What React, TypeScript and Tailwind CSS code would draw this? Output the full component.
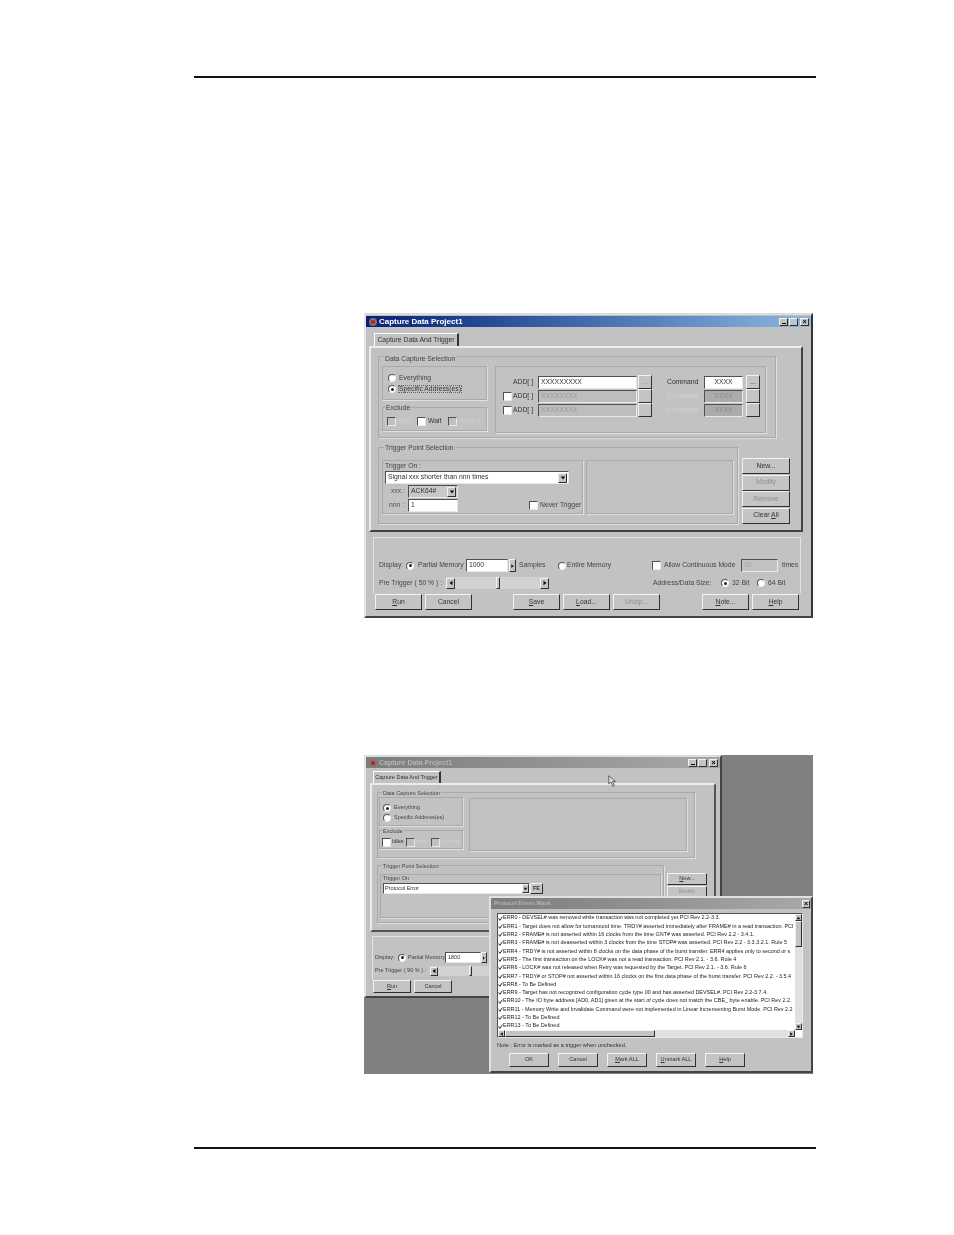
import type { ReactNode } from "react";

const ERRORS = [
  "ERR0 - DEVSEL# was removed while transaction was not completed yet.PCI Rev 2.2-3.3.",
  "ERR1 - Target does not allow for turnaround time. TRDY# asserted immediately after FRAME# in a read transaction. PCI",
  "ERR2 - FRAME# is not asserted within 16 clocks from the time GNT# was asserted. PCI Rev 2.2 - 3.4.1.",
  "ERR3 - FRAME# is not deasserted within 3 clocks from the time STOP# was asserted. PCI Rev 2.2 - 3.3.3.2.1. Rule 5",
  "ERR4 - TRDY# is not asserted within 8 clocks on the data phase of the burst transfer. ERR4 applies only to second or s",
  "ERR5 - The first transaction on the LOCK# was not a read transaction. PCI Rev 2.1. - 3.6. Rule 4",
  "ERR6 - LOCK# was not released when Retry was requested by the Target. PCI Rev 2.1. - 3.6. Rule 6",
  "ERR7 - TRDY# or STOP# not asserted within 16 clocks on the first data phase of the burst transfer. PCI Rev 2.2. - 3.5.4",
  "ERR8 - To Be Defined",
  "ERR9 - Target has not recognized configuration cycle type 00 and has asserted DEVSEL#. PCI Rev 2.2-3.7.4.",
  "ERR10 - The IO byte address [AD0, AD1] given at the start of cycle does not match the CBE_ byte enable. PCI Rev 2.2.",
  "ERR11 - Memory Write and Invalidate Command were not implemented in Linear Incrementing Burst Mode. PCI Rev 2.2",
  "ERR12 - To Be Defined",
  "ERR13 - To Be Defined",
];

const raised = "border border-t-[#f2f2f2] border-l-[#f2f2f2] border-r-[#303030] border-b-[#303030] bg-[#c4c4c4]";
const sunken = "border border-t-[#505050] border-l-[#505050] border-r-[#e8e8e8] border-b-[#e8e8e8]";
const etched = "border border-[#a9a9a9] shadow-[1px_1px_0_#e0e0e0]";

function Btn({ children, className, off }: { children?: ReactNode; className: string; off?: boolean }) {
  return (
    <div className={`${raised} ${className} flex shrink-0 items-center justify-center whitespace-nowrap ${off ? "text-[#8e8e8e]" : "text-[#333]"}`}>
      {children}
    </div>
  );
}

function Radio({ on }: { on?: boolean }) {
  return (
    <span className="flex h-[8px] w-[8px] shrink-0 items-center justify-center rounded-full border border-t-[#555] border-l-[#555] border-r-[#eee] border-b-[#eee] bg-white">
      {on && <span className="h-[3px] w-[3px] rounded-full bg-[#222]" />}
    </span>
  );
}

function Check({ off }: { off?: boolean }) {
  return <span className={`${sunken} block h-[9px] w-[9px] shrink-0 ${off ? "bg-[#c0c0c0]" : "bg-white"}`} />;
}

function Legend({ children, className }: { children: ReactNode; className: string }) {
  return <span className={`absolute whitespace-nowrap bg-[#c2c2c2] px-[1px] text-[#444] ${className}`}>{children}</span>;
}

function Title({ text, inactive, className }: { text: string; inactive?: boolean; className: string }) {
  return (
    <div
      className={`flex shrink-0 items-center justify-between bg-gradient-to-r pl-[3px] pr-[2px] font-bold ${
        inactive ? "from-[#7d7d7d] to-[#a8a8a8] text-[#b5b5b5]" : "from-[#0a1f78] to-[#8db8e0] text-white"
      } ${className}`}
    >
      <span className="flex items-center gap-[2px] whitespace-nowrap">
        <span className="h-[8px] w-[8px] rounded-full border-2 border-[#777] bg-[#e01010]" />
        {text}
      </span>
      <span className="flex gap-[1px]">
        <span className={`${raised} flex h-[8px] w-[9px] items-end justify-center pb-[1px]`}>
          <span className="h-[1px] w-[4px] bg-black" />
        </span>
        <span className={`${raised} h-[8px] w-[9px]`} />
        <span className={`${raised} ml-[1px] flex h-[8px] w-[9px] items-center justify-center text-[7px] leading-none text-black`}>×</span>
      </span>
    </div>
  );
}

function Arrow({ dir }: { dir: "down" | "left" | "right" | "up" }) {
  const pts = { down: "1,2 7,2 4,6", left: "6,1 6,7 2,4", right: "2,1 2,7 6,4", up: "1,6 7,6 4,2" }[dir];
  return (
    <svg viewBox="0 0 8 8" className="h-[6px] w-[6px]">
      <polygon points={pts} fill="#111" />
    </svg>
  );
}

function AddRow({ active, tick, value, cmd }: { active?: boolean; tick?: boolean; value: string; cmd: string }) {
  return (
    <div className="flex h-[14px] items-center">
      <span className="flex w-[10px] shrink-0">{tick && <Check />}</span>
      <span className="w-[25px] shrink-0 whitespace-nowrap text-[#333]">ADD[ ]</span>
      <div className={`${sunken} flex h-[13px] w-[99px] shrink-0 items-center pl-[2px] ${active ? "bg-white text-[#333]" : "bg-[#bdbdbd] text-[#999]"}`}>
        {value}
      </div>
      <Btn className="ml-[1px] h-[14px] w-[14px]" off>{active ? "..." : ""}</Btn>
      <span className={`ml-[15px] w-[37px] shrink-0 whitespace-nowrap ${active ? "text-[#333]" : "text-[#d2d2d2]"}`}>Command</span>
      <div className={`${sunken} flex h-[13px] w-[39px] shrink-0 items-center justify-center ${active ? "bg-white text-[#333]" : "bg-[#ababab] text-[#8c8c8c]"}`}>
        {cmd}
      </div>
      <Btn className="ml-[3px] h-[14px] w-[14px]">{active ? "..." : ""}</Btn>
    </div>
  );
}

function FirstWindow() {
  return (
    <div className="ml-[364px] h-[305px] w-[449px] border-t-2 border-r-2 border-b-2 border-l-2 border-t-[#dcdcdc] border-r-[#333] border-b-[#444] border-l-[#e4e4e4] bg-[#c2c2c2] pt-[1px] text-[6.8px] leading-none">
      <Title text="Capture Data Project1" className="h-[11px] text-[8px]" />
      <div className="ml-[8px] mt-[6px] flex h-[13px] w-[85px] items-center justify-center whitespace-nowrap border-t border-l border-r-2 border-t-white border-l-white border-r-[#333] text-[#333]">
        Capture Data And Trigger
      </div>
      <div className="ml-[3px] h-[186px] w-[434px] border-2 border-t-[#ececec] border-l-[#ececec] border-r-[#444] border-b-[#444] pl-[7px] pt-[8px]">
        {/* capture selection */}
        <div className={`relative flex h-[82px] w-[398px] gap-[8px] pl-[3px] pt-[9px] ${etched}`}>
          <Legend className="-top-[1px] left-[5px]">Data Capture Selection</Legend>
          <div className="flex w-[105px] flex-col gap-[7px]">
            <div className={`flex h-[34px] flex-col gap-[3px] pl-[5px] pt-[7px] ${etched}`}>
              <div className="flex items-center gap-[3px] text-[#444]"><Radio />Everything</div>
              <div className="flex items-center gap-[3px] text-[#333]"><Radio on /><span className="outline outline-1 outline-dotted outline-[#666]">Specific Address(es)</span></div>
            </div>
            <div className={`relative flex h-[24px] items-center gap-[2px] pl-[4px] pt-[5px] ${etched}`}>
              <Legend className="-top-[3px] left-[2px]">Exclude</Legend>
              <Check off /><span className="w-[17px] text-[#d0d0d0]">Idles</span>
              <Check /><span className="w-[18px] text-[#333]">Wait</span>
              <Check off /><span className="text-[#d0d0d0]">Retries</span>
            </div>
          </div>
          <div className={`h-[67px] w-[271px] pl-[7px] pt-[8px] ${etched}`}>
            <AddRow active value="XXXXXXXXX" cmd="XXXX" />
            <AddRow tick value="XXXXXXXX" cmd="XXXX" />
            <AddRow tick value="XXXXXXXX" cmd="XXXX" />
          </div>
        </div>

        {/* trigger */}
        <div className="mt-[9px] flex gap-[4px]">
          <div className={`relative flex h-[77px] w-[360px] gap-[3px] pl-[3px] pt-[12px] ${etched}`}>
            <Legend className="-top-[3px] left-[5px]">Trigger Point Selection</Legend>
            <div className={`relative h-[54px] w-[201px] pl-[2px] pt-[10px] ${etched}`}>
              <span className="absolute left-[2px] top-[2px] text-[#444]">Trigger On :</span>
              <div className={`${sunken} flex h-[13px] w-[184px] items-center justify-between bg-white pl-[2px] pr-[1px] text-[#333]`}>
                Signal xxx shorter than nnn times
                <Btn className="h-[10px] w-[9px]"><Arrow dir="down" /></Btn>
              </div>
              <div className="mt-[1px] flex h-[13px] items-center">
                <span className="w-[23px] pl-[6px] text-[#555]">xxx :</span>
                <div className={`${sunken} flex h-[13px] w-[50px] items-center justify-between bg-[#c8c8c8] pl-[2px] pr-[1px] text-[#333]`}>
                  ACK64#
                  <Btn className="h-[10px] w-[9px]"><Arrow dir="down" /></Btn>
                </div>
              </div>
              <div className="mt-[1px] flex h-[13px] items-center">
                <span className="w-[23px] pl-[4px] text-[#555]">nnn :</span>
                <div className={`${sunken} flex h-[13px] w-[50px] items-center bg-white pl-[2px] text-[#333]`}>1</div>
                <span className="ml-[71px] flex items-center gap-[2px] whitespace-nowrap text-[#444]"><Check />Never Trigger</span>
              </div>
            </div>
            <div className={`h-[54px] w-[147px] ${etched}`} />
          </div>
          <div className="mt-[11px] flex flex-col gap-[0.5px]">
            <Btn className="h-[16px] w-[48px]">New...</Btn>
            <Btn className="h-[16px] w-[48px]" off>Modify</Btn>
            <Btn className="h-[16px] w-[48px]" off>Remove</Btn>
            <Btn className="h-[16px] w-[48px]"><span>Clear <u>A</u>ll</span></Btn>
          </div>
        </div>
      </div>

      {/* lower panel */}
      <div className="ml-[7px] mt-[5px] h-[56px] w-[428px] border-t border-l border-r border-t-[#e4e4e4] border-l-[#e4e4e4] border-r-[#e4e4e4] pl-[5px] pt-[21px] text-[#444]">
        <div className="flex h-[13px] items-center whitespace-nowrap">
          <span className="w-[27px] shrink-0">Display:</span>
          <Radio on />
          <span className="ml-[4px] w-[48px] shrink-0">Partial Memory</span>
          <div className={`${sunken} flex h-[13px] w-[42px] shrink-0 items-center bg-white pl-[2px] text-[#333]`}>1000</div>
          <Btn className="ml-[1px] h-[13px] w-[7px]"><Arrow dir="right" /></Btn>
          <span className="ml-[3px] w-[27px] shrink-0">Samples</span>
          <span className="ml-[12px] flex shrink-0"><Radio /></span>
          <span className="ml-[1px] w-[44px] shrink-0">Entire Memory</span>
          <span className="ml-[41px] flex shrink-0"><Check /></span>
          <span className="ml-[3px] w-[72px] shrink-0">Allow Continuous Mode</span>
          <div className={`${sunken} ml-[5px] flex h-[13px] w-[37px] shrink-0 items-center pl-[2px] text-[#aaa]`}>30</div>
          <span className="ml-[4px]">times</span>
        </div>
        <div className="mt-[5px] flex h-[12px] items-center whitespace-nowrap">
          <span className="w-[67px] shrink-0">Pre Trigger ( 50 % ) :</span>
          <div className="flex h-[12px] w-[103px] shrink-0 items-center justify-between bg-[#d2d2d2]">
            <Btn className="h-[11px] w-[9px]"><Arrow dir="left" /></Btn>
            <Btn className="h-[12px] w-[4px]" />
            <Btn className="h-[11px] w-[9px]"><Arrow dir="right" /></Btn>
          </div>
          <span className="ml-[104px] w-[58px] shrink-0">Address/Data Size:</span>
          <span className="ml-[10px] flex shrink-0"><Radio on /></span>
          <span className="ml-[1px] w-[27px] shrink-0 pl-[2px]">32 Bit</span>
          <Radio />
          <span className="ml-[1px] pl-[2px]">64 Bit</span>
        </div>
      </div>
      <div className="ml-[9px] mt-[1px] flex h-[16px] items-center text-[#333]">
        <Btn className="h-[16px] w-[47px]"><span><u>R</u>un</span></Btn>
        <Btn className="ml-[3px] h-[16px] w-[47px]">Cancel</Btn>
        <Btn className="ml-[41px] h-[16px] w-[47px]"><span><u>S</u>ave</span></Btn>
        <Btn className="ml-[3px] h-[16px] w-[47px]"><span><u>L</u>oad...</span></Btn>
        <Btn className="ml-[3px] h-[16px] w-[47px]" off>Unzip...</Btn>
        <Btn className="ml-[42px] h-[16px] w-[47px]"><span><u>N</u>ote...</span></Btn>
        <Btn className="ml-[3px] h-[16px] w-[47px]"><span><u>H</u>elp</span></Btn>
      </div>
    </div>
  );
}

function ErrorMask() {
  return (
    <div className="absolute left-[125px] top-[141px] h-[177px] w-[324px] border-2 border-t-[#e0e0e0] border-l-[#e0e0e0] border-r-[#444] border-b-[#444] bg-[#c2c2c2] text-[5.6px] leading-none">
      <div className="flex h-[11px] items-center justify-between bg-gradient-to-r from-[#7d7d7d] to-[#a8a8a8] pl-[3px] pr-[1px] font-bold text-[#b5b5b5]">
        Protocol Errors Mask
        <span className={`${raised} flex h-[8px] w-[8px] items-center justify-center text-[7px] text-black`}>×</span>
      </div>
      <div className={`ml-[6px] mt-[4px] h-[125px] w-[306px] ${sunken} bg-white`}>
        <div className="flex h-[116px]">
          <div className="h-full w-[297px] overflow-hidden text-[5.45px] text-[#222]">
            {ERRORS.map((line) => (
              <div key={line} className="flex h-[8.3px] items-center whitespace-nowrap">
                <svg viewBox="0 0 8 8" className="h-[5px] w-[5px] shrink-0">
                  <path d="M1 4 L3 7 L7 1" fill="none" stroke="#111" strokeWidth="1.4" />
                </svg>
                {line}
              </div>
            ))}
          </div>
          <div className="flex h-full w-[7px] flex-col justify-between bg-[#e0e0e0]">
            <Btn className="h-[7px] w-[7px]"><Arrow dir="up" /></Btn>
            <Btn className="mb-auto h-[26px] w-[7px]" />
            <Btn className="h-[7px] w-[7px]"><Arrow dir="down" /></Btn>
          </div>
        </div>
        <div className="flex h-[7px] w-[297px] items-center bg-[#e0e0e0]">
          <Btn className="h-[7px] w-[7px]"><Arrow dir="left" /></Btn>
          <Btn className="h-[7px] w-[150px]" />
          <Btn className="ml-auto h-[7px] w-[7px]"><Arrow dir="right" /></Btn>
        </div>
      </div>
      <div className="ml-[6px] mt-[5px] whitespace-nowrap text-[#333]">Note : Error is marked as a trigger when unchecked.</div>
      <div className="ml-[18px] mt-[4px] flex gap-[9px] text-[#333]">
        <Btn className="h-[14px] w-[40px]">OK</Btn>
        <Btn className="h-[14px] w-[40px]">Cancel</Btn>
        <Btn className="h-[14px] w-[40px]"><span><u>M</u>ark ALL</span></Btn>
        <Btn className="h-[14px] w-[40px]"><span><u>U</u>nmark ALL</span></Btn>
        <Btn className="h-[14px] w-[40px]"><span><u>H</u>elp</span></Btn>
      </div>
    </div>
  );
}

function SecondWindow() {
  return (
    <div className="relative ml-[364px] h-[319px] w-[449px] bg-[#808080] text-[5.5px] leading-none">
      <div className="h-[243px] w-[358px] border-2 border-t-[#dcdcdc] border-r-[#444] border-b-[#444] border-l-[#e4e4e4] bg-[#c2c2c2]">
        <Title text="Capture Data Project1" inactive className="h-[11px] text-[7px]" />
        <div className="ml-[7px] mt-[3px] flex h-[12px] w-[68px] items-center justify-center whitespace-nowrap border-t border-l border-r-2 border-t-white border-l-white border-r-[#333] text-[#333]">
          Capture Data And Trigger
        </div>
        <div className="ml-[4px] h-[149px] w-[346px] border-2 border-t-[#ececec] border-l-[#ececec] border-r-[#555] border-b-[#555] pl-[5px] pt-[7px]">
          <div className={`relative flex h-[66px] w-[318px] gap-[6px] pl-[1px] pt-[4px] ${etched}`}>
            <Legend className="-top-[2px] left-[4px]">Data Capture Selection</Legend>
            <div className="flex w-[84px] flex-col gap-[4px]">
              <div className={`flex h-[29px] flex-col gap-[2px] pl-[3px] pt-[6px] ${etched}`}>
                <div className="flex items-center gap-[3px] text-[#444]"><Radio on />Everything</div>
                <div className="flex items-center gap-[3px] text-[#444]"><Radio />Specific Address(es)</div>
              </div>
              <div className={`relative flex h-[19px] items-center gap-[1px] pl-[2px] pt-[5px] ${etched}`}>
                <Legend className="-top-[2px] left-[2px]">Exclude</Legend>
                <Check /><span className="w-[13px] text-[#333]">Idles</span>
                <Check off /><span className="w-[14px] text-[#d0d0d0]">Wait</span>
                <Check off /><span className="text-[#d0d0d0]">Retries</span>
              </div>
            </div>
            <div className={`mt-[1px] h-[53px] w-[218px] ${etched}`} />
          </div>
          <div className="mt-[7px] flex gap-[3px]">
            <div className={`relative h-[58px] w-[287px] pl-[2px] pt-[8px] ${etched}`}>
              <Legend className="-top-[2px] left-[4px]">Trigger Point Selection</Legend>
              <div className={`relative h-[44px] w-[281px] pl-[2px] pt-[8px] ${etched}`}>
                <span className="absolute left-[2px] top-[1px] text-[#444]">Trigger On</span>
                <div className="flex h-[11px] items-center">
                  <div className={`${sunken} flex h-[11px] w-[147px] items-center justify-between bg-white pl-[1px] text-[#333]`}>
                    Protocol Error
                    <Btn className="h-[9px] w-[7px]"><Arrow dir="down" /></Btn>
                  </div>
                  <Btn className="h-[11px] w-[13px] border-[#222] font-bold">FE</Btn>
                </div>
              </div>
            </div>
            <div className="mt-[8px] flex flex-col gap-[1px]">
              <Btn className="h-[12px] w-[40px]"><span><u>N</u>ew...</span></Btn>
              <Btn className="h-[12px] w-[40px]" off>Modify</Btn>
            </div>
          </div>
        </div>
        <div className="ml-[6px] mt-[4px] h-[44px] w-[342px] border-t border-l border-t-[#e4e4e4] border-l-[#e4e4e4] pl-[2px] pt-[15px] text-[#444]">
          <div className="flex h-[11px] items-center whitespace-nowrap">
            <span className="w-[23px] shrink-0">Display:</span>
            <Radio on />
            <span className="ml-[2px] w-[37px] shrink-0">Partial Memory</span>
            <div className={`${sunken} flex h-[11px] w-[36px] shrink-0 items-center bg-white pl-[2px] text-[#333]`}>1800</div>
            <Btn className="h-[11px] w-[6px]"><Arrow dir="right" /></Btn>
          </div>
          <div className="mt-[3px] flex h-[10px] items-center whitespace-nowrap">
            <span className="w-[55px] shrink-0">Pre Trigger ( 90 % ) :</span>
            <div className="flex h-[10px] w-[100px] shrink-0 items-center bg-[#d2d2d2]">
              <Btn className="h-[9px] w-[8px]"><Arrow dir="left" /></Btn>
              <Btn className="ml-[31px] h-[10px] w-[3px]" />
            </div>
          </div>
        </div>
        <div className="ml-[7px] flex h-[13px] items-center gap-[3px] text-[#333]">
          <Btn className="h-[13px] w-[38px]"><span><u>R</u>un</span></Btn>
          <Btn className="h-[13px] w-[38px]">Cancel</Btn>
        </div>
      </div>
      <svg viewBox="0 0 12 16" className="absolute left-[244px] top-[20px] h-[12px] w-[9px]">
        <path d="M1 1 L1 12 L4 9.5 L6.5 15 L8.5 14 L6 8.5 L10 8.5 Z" fill="#ddd" stroke="#444" strokeWidth="1" />
      </svg>
      <ErrorMask />
    </div>
  );
}

export default function App() {
  return (
    <div className="flex h-[1235px] w-[954px] flex-col bg-white pt-[76px] font-['Liberation_Sans',Arial,sans-serif]">
      <div className="ml-[194px] h-[2px] w-[622px] shrink-0 bg-[#111]" />
      <div className="mt-[235px] blur-[0.6px]">
        <FirstWindow />
      </div>
      <div className="mt-[137px] blur-[0.6px]">
        <SecondWindow />
      </div>
      <div className="ml-[194px] mt-[73px] h-[2px] w-[622px] shrink-0 bg-[#111]" />
    </div>
  );
}
